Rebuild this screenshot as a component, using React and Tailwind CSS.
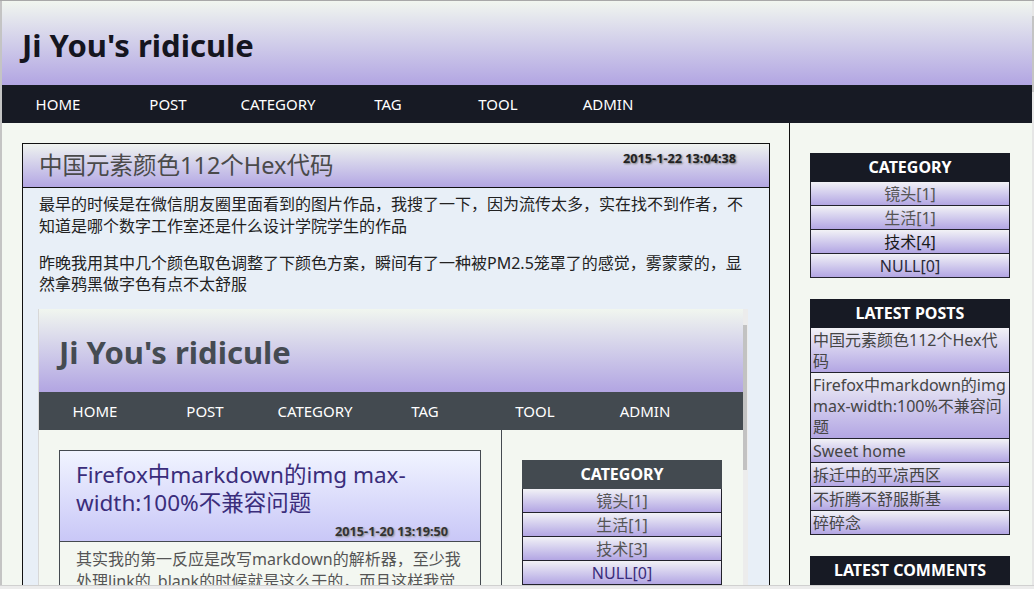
import React from 'react';

const navItems = ['HOME', 'POST', 'CATEGORY', 'TAG', 'TOOL', 'ADMIN'];

const latestPosts = [
    '中国元素颜色112个Hex代码',
    'Firefox中markdown的img max-width:100%不兼容问题',
    'Sweet home',
    '拆迁中的平凉西区',
    '不折腾不舒服斯基',
    '碎碎念',
];

const Nav = ({ dark }) => (
    <div className={`flex h-[38px] pl-px ${dark ? 'bg-[#171a24]' : 'bg-[#434a50]'}`}>
        {navItems.map((item) => (
            <div key={item} className="w-[110px] text-center text-[15px] leading-[38px] text-white">
                {item}
            </div>
        ))}
    </div>
);

const CategoryBox = ({ dark, items }) => (
    <div className="w-[200px]">
        <div className={`h-[29px] text-center text-[16px] font-bold leading-[29px] text-white ${dark ? 'bg-[#171a24]' : 'bg-[#434a50]'}`}>
            CATEGORY
        </div>
        {items.map((it) => (
            <div
                key={it.label}
                className={`h-[24px] border border-t-0 border-[#22222c] bg-linear-to-b from-[#f2f2f6] to-[#b3a6e3] pt-[2px] text-center text-[16px] leading-[21px] ${it.color}`}
            >
                {it.label}
            </div>
        ))}
    </div>
);

const Screenshot = () => (
    <div className="flex h-[280px] w-[710px] -ml-px overflow-hidden border-l border-[#d8d8d8]">
        <div className="w-[704px] flex-none bg-[#f3f7f1]">
            <div className="flex h-[83px] items-center bg-linear-to-b from-[#f1f6ef] to-[#b2a5e2] pl-[20px] pt-[2px]">
                <span className="text-[31px] font-bold text-[#454b52]">Ji You's ridicule</span>
            </div>
            <Nav />
            <div className="flex">
                <div className="h-[200px] w-[463px] flex-none border-r border-[#444a50] pl-[20px] pt-[20px]">
                    <div className="w-[422px] border border-[#444a50]">
                        <div className="relative h-[91px] border-b border-[#444a50] bg-linear-to-b from-[#f1f4ff] to-[#c9c7f7] pl-[16px] pt-[10px]">
                            <div className="w-[360px] text-[22.5px] leading-[28px] text-[#3a2d7b]">
                                Firefox中markdown的img max-width:100%不兼容问题
                            </div>
                            <div className="absolute right-[32px] bottom-[-1px] text-[12.7px] font-bold text-[#333] [text-shadow:1px_1px_2px_#888]">
                                2015-1-20 13:19:50
                            </div>
                        </div>
                        <div className="px-[16px] pt-[6px] text-[16px] leading-[22px] text-[#555]">
                            其实我的第一反应是改写markdown的解析器，至少我处理link的_blank的时候就是这么干的，而且这样我觉得
                        </div>
                    </div>
                </div>
                <div className="pl-[20px] pt-[30px]">
                    <CategoryBox
                        items={[
                            { label: '镜头[1]', color: 'text-[#555]' },
                            { label: '生活[1]', color: 'text-[#555]' },
                            { label: '技术[3]', color: 'text-[#555]' },
                            { label: 'NULL[0]', color: 'text-[#3a2d7b]' },
                        ]}
                    />
                </div>
            </div>
        </div>
        <div className="relative w-[6px] flex-none bg-[#ececec]">
            <div className="absolute left-0 top-[16px] h-[145px] w-[4px] bg-[#c2c2c2]" />
        </div>
    </div>
);

export default function App() {
    return (
        <div className="relative h-[589px] w-[1034px] overflow-hidden border-t border-[#a8a8a8] bg-[#f3f7f1] font-['Noto_Sans','Noto_Sans_CJK_SC',sans-serif]">
            <div className="flex h-full">
                <div className="w-[2px] flex-none bg-[#c4c4c4]" />
                <div className="w-[1030px] flex-none">
                    {/* header */}
                    <div className="flex h-[84px] items-center bg-linear-to-b from-[#f1f6ef] to-[#b2a5e2] pl-[20px] pt-[4px]">
                        <h1 className="text-[31px] font-bold text-[#15151f]">Ji You's ridicule</h1>
                    </div>
                    <Nav dark />

                    <div className="flex">
                        {/* main column */}
                        <div className="h-[470px] w-[788px] flex-none border-r border-[#111] pl-[20px] pt-[20px]">
                            <div className="w-[748px] border border-[#111]">
                                <div className="flex h-[44px] items-start justify-between border-b border-[#111] bg-linear-to-b from-[#eff3ef] to-[#b3a6e3] pl-[16px]">
                                    <h2 className="self-center text-[23.5px] text-[#4a4a4a]">中国元素颜色112个Hex代码</h2>
                                    <span className="mr-[33px] mt-[5px] text-[12.7px] font-bold text-[#222] [text-shadow:1px_1px_2px_#777]">
                                        2015-1-22 13:04:38
                                    </span>
                                </div>
                                <div className="bg-[#e8eff7] px-[16px] pt-[5px] pb-4 text-[16px] leading-[22px] text-[#222]">
                                    <p className="mb-[16px]">
                                        最早的时候是在微信朋友圈里面看到的图片作品，我搜了一下，因为流传太多，实在找不到作者，不知道是哪个数字工作室还是什么设计学院学生的作品
                                    </p>
                                    <p className="mb-[14px] leading-[21px]">
                                        昨晚我用其中几个颜色取色调整了下颜色方案，瞬间有了一种被PM2.5笼罩了的感觉，雾蒙蒙的，显然拿鸦黑做字色有点不太舒服
                                    </p>
                                    <Screenshot />
                                </div>
                            </div>
                        </div>

                        {/* sidebar */}
                        <div className="flex flex-col gap-[21px] pl-[20px] pt-[30px]">
                            <CategoryBox
                                dark
                                items={[
                                    { label: '镜头[1]', color: 'text-[#555]' },
                                    { label: '生活[1]', color: 'text-[#555]' },
                                    { label: '技术[4]', color: 'text-[#1a1a1a]' },
                                    { label: 'NULL[0]', color: 'text-[#2a2a3a]' },
                                ]}
                            />
                            <div className="w-[200px]">
                                <div className="h-[29px] bg-[#171a24] text-center text-[16px] font-bold leading-[29px] text-white">
                                    LATEST POSTS
                                </div>
                                {latestPosts.map((p) => (
                                    <div
                                        key={p}
                                        className="border border-t-0 border-[#22222c] bg-linear-to-b from-[#f2f2f6] to-[#b3a6e3] pt-[2px] pl-[2px] text-[16px] leading-[21px] text-[#454545]"
                                    >
                                        {p}
                                    </div>
                                ))}
                            </div>
                            <div className="w-[200px]">
                                <div className="h-[29px] bg-[#171a24] text-center text-[16px] font-bold leading-[29px] text-white">
                                    LATEST COMMENTS
                                </div>
                            </div>
                        </div>
                    </div>
                </div>
                <div className="relative w-[2px] flex-none bg-[#e6e6e6]">
                    <div className="absolute left-0 top-[15px] h-[76px] w-[2px] bg-[#c4c4c4]" />
                </div>
            </div>
            <div className="absolute bottom-0 left-0 h-[4px] w-full border-t border-[#d0d0d0] bg-[#ececec]" />
        </div>
    );
}
